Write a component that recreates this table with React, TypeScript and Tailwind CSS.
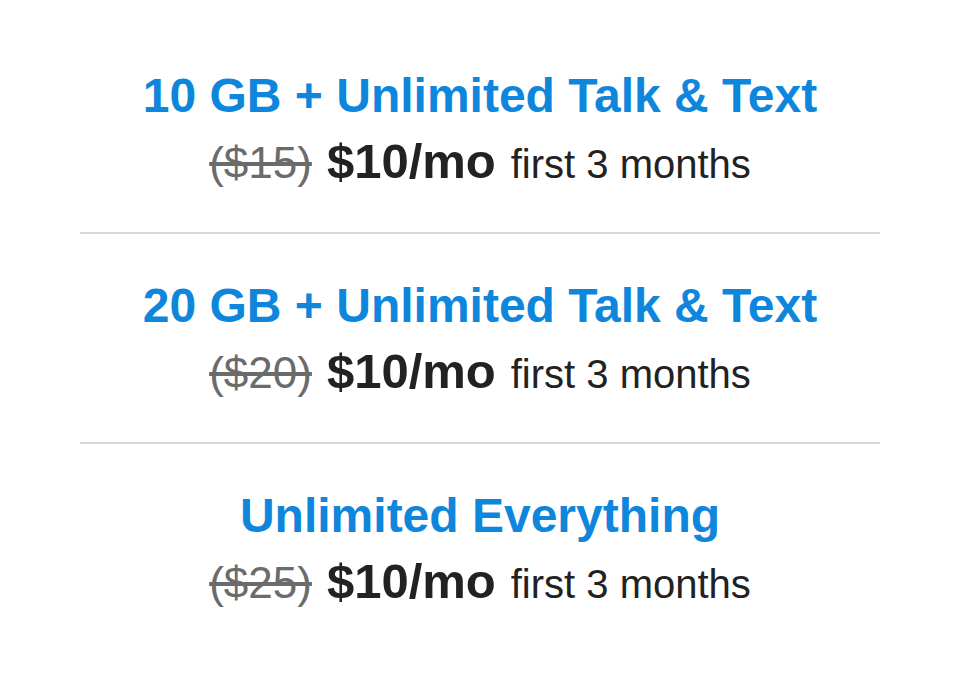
const plans = [
  { title: "10 GB + Unlimited Talk & Text", was: "($15)" },
  { title: "20 GB + Unlimited Talk & Text", was: "($20)" },
  { title: "Unlimited Everything", was: "($25)" },
];

export default function App() {
  return (
    <div className="min-h-screen bg-white font-['Liberation_Sans',Arial,sans-serif]">
      <div className="mx-auto w-[800px] pt-[24px]">
        {plans.map((p, i) => (
          <div
            key={p.title}
            className={`pt-[42px] text-center ${i < plans.length - 1 ? "border-b-2 border-[#dadada] pb-[40px]" : ""}`}
          >
            <h2 className="whitespace-nowrap text-[48px] font-bold leading-[60px] text-[#0d86dc]">
              {p.title}
            </h2>
            <p className="mt-[7px] whitespace-nowrap text-[40px] leading-[56px] text-[#222]">
              <span className="text-[44px] text-[#6b6b6b] line-through">{p.was}</span>
              <span className="ml-[15px] text-[49px] font-bold">$10/mo</span>
              <span className="ml-[15px]">first 3 months</span>
            </p>
          </div>
        ))}
      </div>
    </div>
  );
}
